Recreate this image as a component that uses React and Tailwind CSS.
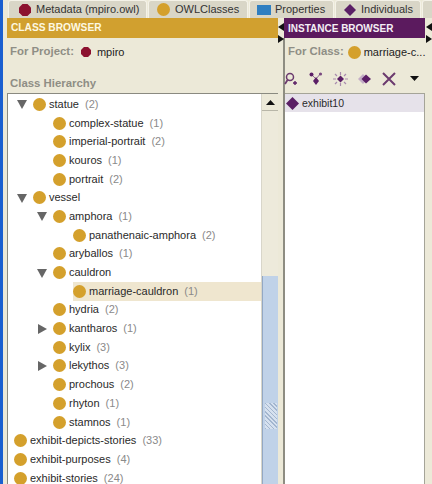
import React from "react";

const rows = [
  { level: 1, arrow: "down", name: "statue", count: 2 },
  { level: 2, name: "complex-statue", count: 1 },
  { level: 2, name: "imperial-portrait", count: 2 },
  { level: 2, name: "kouros", count: 1 },
  { level: 2, name: "portrait", count: 2 },
  { level: 1, arrow: "down", name: "vessel" },
  { level: 2, arrow: "down", name: "amphora", count: 1 },
  { level: 3, name: "panathenaic-amphora", count: 2 },
  { level: 2, name: "aryballos", count: 1 },
  { level: 2, arrow: "down", name: "cauldron" },
  { level: 3, name: "marriage-cauldron", count: 1, selected: true },
  { level: 2, name: "hydria", count: 2 },
  { level: 2, arrow: "right", name: "kantharos", count: 1 },
  { level: 2, name: "kylix", count: 3 },
  { level: 2, arrow: "right", name: "lekythos", count: 3 },
  { level: 2, name: "prochous", count: 2 },
  { level: 2, name: "rhyton", count: 1 },
  { level: 2, name: "stamnos", count: 1 },
  { level: 0, name: "exhibit-depicts-stories", count: 33 },
  { level: 0, name: "exhibit-purposes", count: 4 },
  { level: 0, name: "exhibit-stories", count: 24 },
];

const levelPad = ["pl-[6px]", "pl-[5px]", "pl-[25px]", "pl-[45px]"];

const Dot = () => <span className="block w-[13px] h-[13px] rounded-full bg-[#d4a02c] shrink-0" />;

const Octagon = ({ size = 12 }) => (
  <svg width={size} height={size} viewBox="0 0 12 12" className="shrink-0">
    <polygon points="3.5,0 8.5,0 12,3.5 12,8.5 8.5,12 3.5,12 0,8.5 0,3.5" fill="#8c1230" />
  </svg>
);

const Diamond = ({ size = 12 }) => (
  <svg width={size} height={size} viewBox="0 0 12 12" className="shrink-0">
    <polygon points="6,0 12,6 6,12 0,6" fill="#5b1f66" />
  </svg>
);

const Arrow = ({ dir }) => (
  <svg width="10" height="10" viewBox="0 0 10 10">
    {dir === "down" ? (
      <polygon points="0,1 10,1 5,10" fill="#666" />
    ) : (
      <polygon points="1,0 10,5 1,10" fill="#666" />
    )}
  </svg>
);

const Tab = ({ icon, label, className }) => (
  <div className={`h-[18px] flex items-center bg-[#d9d6c7] border border-b-0 border-[#f4f2e8] rounded-t-[3px] shrink-0 ${className}`}>
    {icon}
    {label && <span>{label}</span>}
  </div>
);

const TreeRow = ({ row }) => (
  <div className={`h-[18.7px] flex items-center ${levelPad[row.level]}`}>
    {row.level > 0 && (
      <span className="w-[20px] h-full shrink-0 flex items-center pl-[4px]">
        {row.arrow && <Arrow dir={row.arrow} />}
      </span>
    )}
    <div className={`flex items-center flex-1 h-full whitespace-nowrap ${row.selected ? "bg-[#efe6cf]" : ""}`}>
      <Dot />
      <span className="ml-[3px] text-[#2a2a2a]">{row.name}</span>
      {row.count !== undefined && <span className="ml-[6px] text-[#8a8a8a]">({row.count})</span>}
    </div>
  </div>
);

const Splitter = ({ className }) => (
  <div className={`absolute flex flex-col gap-[4px] ${className}`}>
    <svg width="6" height="8" viewBox="0 0 6 8"><polygon points="6,0 6,8 0,4" fill="#111" /></svg>
    <svg width="6" height="8" viewBox="0 0 6 8"><polygon points="0,0 0,8 6,4" fill="#111" /></svg>
  </div>
);

const App = () => {
  return (
    <div className="relative w-[432px] h-[484px] overflow-hidden flex bg-[#ece9d8] text-[11px] leading-none font-['Liberation_Sans',sans-serif]">
      <div className="w-[3px] bg-[#1a5fd0] shrink-0" />
      <div className="flex-1 min-w-0 flex flex-col pl-[4px]">
        {/* tabs */}
        <div className="h-[18px] flex gap-[1px] pl-[1px] text-[#333] shrink-0">
          <Tab icon={<Octagon />} label="Metadata (mpiro.owl)" className="w-[139px] pl-[10px] gap-[5px]" />
          <Tab icon={<Dot />} label="OWLClasses" className="w-[100px] pl-[8px] gap-[5px]" />
          <Tab
            icon={<span className="block w-[14px] h-[10px] bg-[#2f7fc1] shrink-0" />}
            label="Properties"
            className="w-[85px] pl-[7px] gap-[4px]"
          />
          <Tab icon={<Diamond />} label="Individuals" className="w-[86px] pl-[8px] gap-[5px]" />
          <Tab className="w-[20px]" />
        </div>
        <div className="flex-1 min-h-0 flex">
          {/* class browser */}
          <div className="w-[271px] shrink-0 flex flex-col">
            <div className="h-[20px] pt-[1px] bg-[#d1a02f] text-[#fdf8e2] text-[10.2px] font-bold flex items-center pl-[4px] shrink-0">CLASS BROWSER</div>
            <div className="h-[27px] flex items-center pl-[3px] pt-[1px] shrink-0">
              <span className="font-bold text-[11.4px] text-[#8f8e85]">For Project:</span>
              <span className="ml-[7px]"><Octagon size={10} /></span>
              <span className="ml-[6px] text-[#222]">mpiro</span>
            </div>
            <div className="h-[28px] flex items-center pl-[3px] pt-[9px] font-bold text-[11.4px] text-[#8f8e85] shrink-0">Class Hierarchy</div>
            <div className="flex-1 min-h-0 flex bg-white border border-b-0 border-r-0 border-[#8a8a80] overflow-hidden">
              <div className="flex-1 min-w-0 pt-[1px]">
                {rows.map((row) => (
                  <TreeRow key={row.name} row={row} />
                ))}
              </div>
              {/* scrollbar */}
              <div className="w-[17px] shrink-0 flex flex-col bg-[#edeadb] border-l border-[#d8d6ca]">
                <div className="h-[17px] flex items-center justify-center bg-[#ece9d8] border-b border-[#b8b6a8]">
                  <svg width="9" height="5" viewBox="0 0 9 5"><polygon points="4.5,0 9,5 0,5" fill="#111" /></svg>
                </div>
                <div className="h-[165px]" />
                <div className="flex-1 bg-[#c0d2e8] border-l border-[#93a8c4] flex justify-center pt-[127px]">
                  <div className="w-[12px] h-[26px] bg-[repeating-linear-gradient(45deg,#a3b6cf_0,#a3b6cf_1px,#d6e1ef_1px,#d6e1ef_3px)]" />
                </div>
              </div>
            </div>
          </div>
          <div className="w-[5px] shrink-0" />
          {/* instance browser */}
          <div className="w-[142px] shrink-0 flex flex-col">
            <div className="h-[20px] pt-[1px] ml-[1px] bg-[#5b1a5e] text-[#f4eef4] text-[10px] font-bold flex items-center pl-[4px] shrink-0">INSTANCE BROWSER</div>
            <div className="flex-1 min-h-0 flex flex-col border-l-2 border-[#8e8d82]">
              <div className="h-[27px] flex items-center pl-[3px] pt-[1px] shrink-0 whitespace-nowrap">
                <span className="font-bold text-[11.4px] text-[#8f8e85]">For Class:</span>
                <span className="ml-[4px]"><Dot /></span>
                <span className="ml-[3px] text-[#222]">marriage-c...</span>
              </div>
              <div className="h-[28px] flex items-center shrink-0 gap-[10px] pb-[1px] -ml-[1px]">
                <svg width="14" height="14" viewBox="0 0 14 14" fill="none">
                  <circle cx="6" cy="5" r="3.5" stroke="#6b3a6e" strokeWidth="1.5" />
                  <path d="M3.5 8 L1 12" stroke="#6b3a6e" strokeWidth="1.8" />
                  <path d="M9 11 h4 M11 9 v4" stroke="#5b1f66" strokeWidth="1.4" />
                </svg>
                <svg width="14" height="14" viewBox="0 0 14 14" className="ml-[1px]">
                  <path d="M2 2 L7 7 M12 1 L7 7 M7 7 V12" stroke="#8f6a92" strokeWidth="1" />
                  <circle cx="2.5" cy="2.5" r="2" fill="#5b1f66" />
                  <circle cx="11.5" cy="2" r="1.6" fill="#7a4a80" />
                  <polygon points="7,5 10,9 7,13 4,9" fill="#5b1f66" />
                </svg>
                <svg width="15" height="14" viewBox="0 0 15 14">
                  <path d="M7.5 0 V3 M7.5 11 V14 M0 7 H3 M12 7 H15 M2 2 L4 4 M13 2 L11 4 M2 12 L4 10 M13 12 L11 10" stroke="#a98bae" strokeWidth="1.2" />
                  <polygon points="7.5,3.5 11,7 7.5,10.5 4,7" fill="#5b1f66" />
                </svg>
                <svg width="14" height="14" viewBox="0 0 14 14">
                  <polygon points="5,2 10,7 5,12 0,7" fill="#c3adc6" />
                  <polygon points="8,2.5 13,7 8,11.5 3.5,7" fill="#5b1f66" />
                </svg>
                <svg width="14" height="14" viewBox="0 0 14 14">
                  <path d="M1 1 L13 13 M13 1 L1 13" stroke="#6b3a6e" strokeWidth="2" />
                </svg>
                <svg width="9" height="5" viewBox="0 0 9 5" className="ml-[4px]">
                  <polygon points="0,0 9,0 4.5,5" fill="#111" />
                </svg>
              </div>
              <div className="flex-1 min-h-0 bg-white border-t border-r border-[#a5a498]">
                <div className="h-[18px] bg-[#e6e2ea] flex items-center pl-[1px] gap-[3px]">
                  <Diamond size={13} />
                  <span className="text-[#2a2a2a] text-[10.5px]">exhibit10</span>
                </div>
              </div>
            </div>
          </div>
        </div>
      </div>
      <Splitter className="left-[278px] top-[23px]" />
      <Splitter className="left-[426px] top-[23px]" />
    </div>
  );
};

export default App;
